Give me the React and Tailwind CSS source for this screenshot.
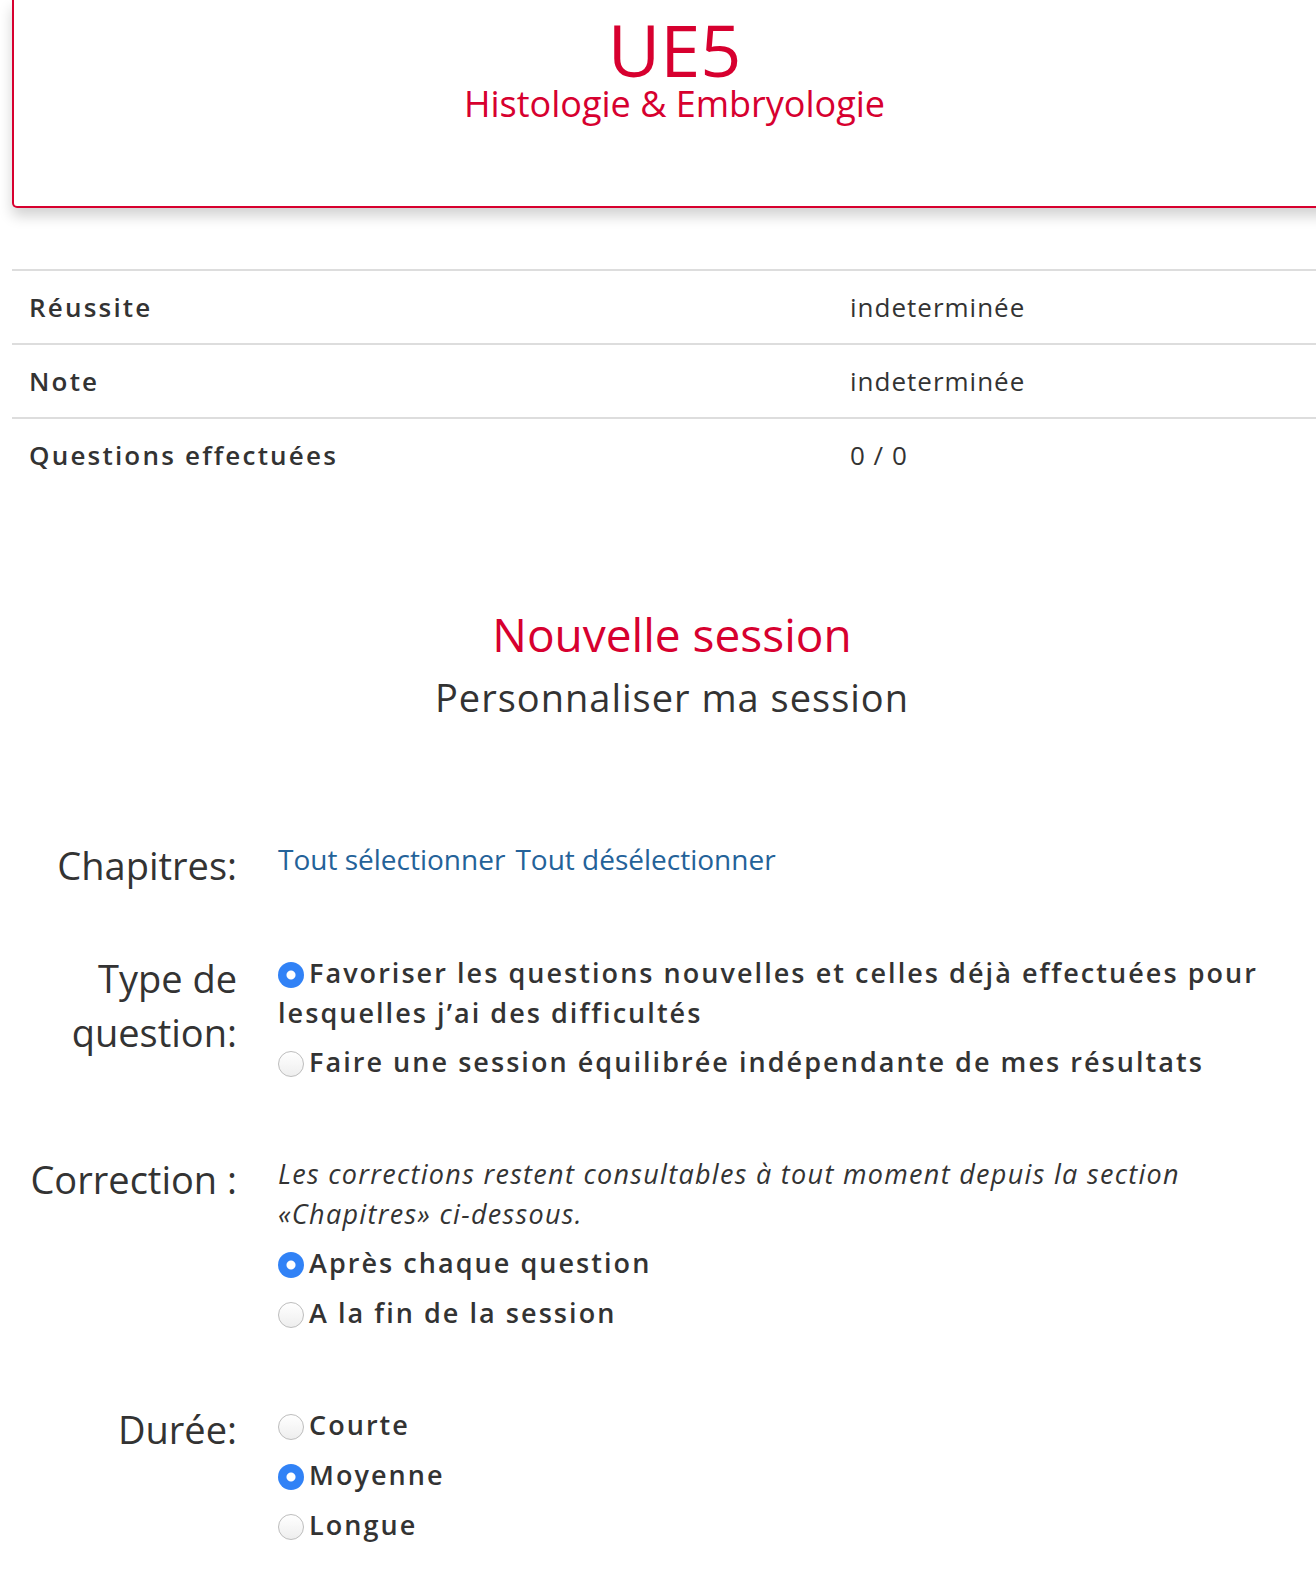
import React from 'react';

const RED = 'text-[#d7002f]';

function Radio({ checked, children, className = '' }) {
  return (
    <div className={`text-[27px] leading-[40px] font-semibold tracking-[2.05px] text-[#333] ${className}`}>
      {checked ? (
        <span className="inline-block w-[26px] h-[26px] rounded-full bg-[radial-gradient(circle,#ffffff_4px,#3182f6_5px)] align-[-5px] mr-[5px]" />
      ) : (
        <span className="inline-block w-[26px] h-[26px] rounded-full border border-[#bdbdbd] bg-gradient-to-b from-white to-[#eeeeee] align-[-5px] mr-[5px]" />
      )}
      {children}
    </div>
  );
}

function Row({ label, children, className = '' }) {
  return (
    <div className={`grid grid-cols-[225px_1022px] gap-x-[41px] items-start ${className}`}>
      <div className="text-right text-[38px] leading-[54px] text-[#333]">{label}</div>
      <div>{children}</div>
    </div>
  );
}

export default function App() {
  const stats = [
    ['Réussite', 'indeterminée'],
    ['Note', 'indeterminée'],
    ['Questions effectuées', '0 / 0'],
  ];

  return (
    <div className="w-[1316px] min-h-[1574px] overflow-hidden bg-white font-['Open_Sans',sans-serif] text-[#333]">
      <div className="pl-[12px] w-[1340px]">
        {/* header card */}
        <div className="w-[1325px] border-x-2 border-b-2 border-[#d7002f] rounded-b-[5px] shadow-[0_8px_14px_rgba(0,0,0,0.18)] pt-[12px] pb-[84px] text-center">
          <div className={`text-[72px] leading-[74px] ${RED}`}>UE5</div>
          <div className={`text-[36px] leading-[36px] ${RED}`}>Histologie &amp; Embryologie</div>
        </div>

        {/* stats table */}
        <div className="mt-[61px] w-[1325px]">
          {stats.map(([k, v]) => (
            <div key={k} className="grid grid-cols-[818px_1fr] border-t-2 border-[#dddddd] py-[19px] text-[26px] leading-[34px]">
              <div className="pl-[17px] font-semibold tracking-[2.2px]">{k}</div>
              <div className="pl-[20px] tracking-[1px]">{v}</div>
            </div>
          ))}
        </div>

        {/* session form */}
        <div className="w-[1320px]">
          <h2 className={`mt-[115px] text-center text-[46px] leading-[56px] ${RED}`}>Nouvelle session</h2>
          <h3 className="mt-[11px] text-center text-[38px] leading-[48px] tracking-[1px] text-[#333]">Personnaliser ma session</h3>

          <Row label="Chapitres:" className="mt-[117px]">
            <div className="pt-[1px] text-[28px] leading-[40px] text-[#246299] flex gap-[10px]">
              <span>Tout sélectionner</span>
              <span>Tout désélectionner</span>
            </div>
          </Row>

          <Row label={<>Type de<br />question:</>} className="mt-[59px]">
            <div className="pt-[2px]">
              <Radio checked className="mb-[9px]">
                Favoriser les questions nouvelles et celles déjà effectuées pour lesquelles j’ai des difficultés
              </Radio>
              <Radio>Faire une session équilibrée indépendante de mes résultats</Radio>
            </div>
          </Row>

          <Row label="Correction :" className="mt-[70px]">
            <div className="pt-[2px]">
              <p className="italic text-[27px] leading-[40px] tracking-[1.3px] text-[#333] mb-[9px]">
                Les corrections restent consultables à tout moment depuis la section «Chapitres» ci-dessous.
              </p>
              <Radio checked className="mb-[10px]">Après chaque question</Radio>
              <Radio>A la fin de la session</Radio>
            </div>
          </Row>

          <Row label="Durée:" className="mt-[69px]">
            <div className="pt-[3px] flex flex-col gap-[10px]">
              <Radio>Courte</Radio>
              <Radio checked>Moyenne</Radio>
              <Radio>Longue</Radio>
            </div>
          </Row>
        </div>
      </div>
    </div>
  );
}
